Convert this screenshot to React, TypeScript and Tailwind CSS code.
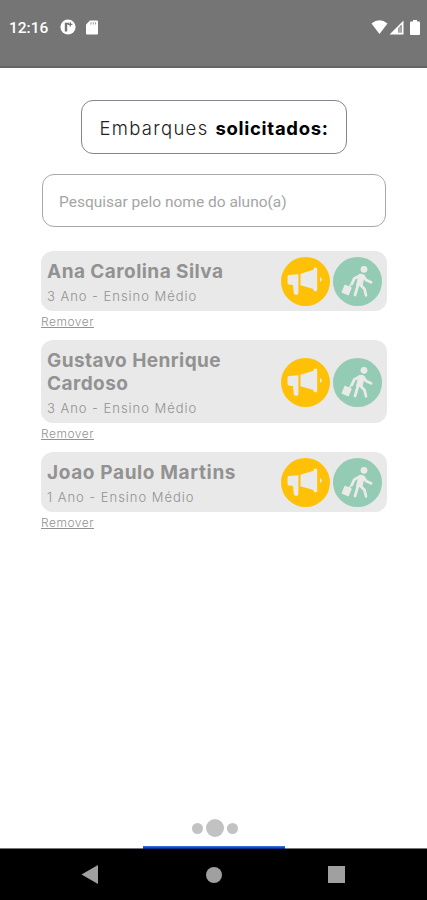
import React from "react";

const students = [
  { id: 1, name: "Ana Carolina Silva", grade: "3 Ano - Ensino Médio", nameClass: "tracking-[0.45px]" },
  { id: 2, name: "Gustavo Henrique Cardoso", grade: "3 Ano - Ensino Médio", nameClass: "tracking-[0.43px]" },
  { id: 3, name: "Joao Paulo Martins", grade: "1 Ano - Ensino Médio", nameClass: "tracking-[0.63px]" },
];

const StatusBar: React.FC = () => (
  <header className="flex h-[68px] shrink-0 items-start justify-between border-b-2 border-[#646464] bg-[#757575] pt-[18px] pr-[7px] pl-[9px] text-white">
    <div className="flex h-[18px] items-center">
      <span className="w-[40px] pt-px font-['Roboto',sans-serif] text-[15.5px] leading-5 font-medium whitespace-nowrap">12:16</span>
      <svg className="ml-[11px] h-4 w-4" viewBox="0 0 16 16">
        <circle cx="8" cy="8" r="7.6" fill="#fff" />
        <path d="M4.8 3.8H9V5.6H7.2V12.5H4.8Z" fill="#757575" />
        <path d="M10.3 3.2V7.6M8.2 5.4H12.4" stroke="#757575" strokeWidth="1.3" />
      </svg>
      <svg className="ml-[10px] h-[15px] w-3" viewBox="0 0 12 15">
        <path d="M4 .5H11Q12 .5 12 1.5V13.5Q12 14.5 11 14.5H1Q0 14.5 0 13.5V4.5Z" fill="#fff" />
        <path d="M5 2.2V4.5M7.3 2.2V4.5M9.6 2.2V4.5" stroke="#9a9a9a" strokeWidth="1" />
      </svg>
    </div>
    <div className="flex h-[18px] items-center">
      <svg className="h-4 w-[17px]" viewBox="0 0 17 16">
        <path d="M.5 4.5Q8.5-1.8 16.5 4.5L8.5 15Z" fill="#fff" />
      </svg>
      <svg className="ml-px h-[15px] w-[15px]" viewBox="0 0 15 15">
        <path fillRule="evenodd" d="M.5 14.5 14.5.5V14.5ZM9.3 8V12.8H12.7V4.6Z" fill="#fff" />
        <path d="M11 7V13" stroke="#fff" strokeWidth=".8" />
      </svg>
      <svg className="ml-[6px] h-[15px] w-[10px]" viewBox="0 0 10 15">
        <path d="M3 0H7V1.5H9Q10 1.5 10 2.5V14Q10 15 9 15H1Q0 15 0 14V2.5Q0 1.5 1 1.5H3Z" fill="#fff" />
      </svg>
    </div>
  </header>
);

const MegaphoneIcon: React.FC = () => (
  <svg className="h-[49px] w-[49px]" viewBox="0 0 49 49">
    <circle cx="24.5" cy="24.5" r="24.5" fill="#ffc107" />
    <path
      d="M8 18Q6.5 18.2 6.5 19.8V25.8Q6.5 27.4 8 27.6L12 28L12.8 36Q13 37.8 14.7 37.8H15.8Q17.4 37.8 17.4 36V17.2ZM19.5 16.8 32.5 12.8V12Q32.5 10.5 34 10.5H34.7Q36.2 10.5 36.2 12V32.7Q36.2 34.2 34.7 34.2H34Q32.5 34.2 32.5 32.7V32L19.5 28.3ZM39 20Q42.8 22.5 39 25Z"
      fill="#eaeaea"
    />
  </svg>
);

const TravelerIcon: React.FC = () => (
  <svg className="h-[49px] w-[49px]" viewBox="0 0 49 49">
    <circle cx="24.5" cy="24.5" r="24.5" fill="#94cbb5" />
    <circle cx="31" cy="12.3" r="3.4" fill="#eaeaea" />
    <path d="M26 17.5Q29.5 16.2 31.2 19L29 28.8 23.5 28.2Z" fill="#eaeaea" stroke="#eaeaea" strokeWidth="1" strokeLinejoin="round" />
    <path d="M27 18.5 21.3 21.5 18.8 26.8M30.5 19 33 23 38 25.3M25 28 22 38M28 28.5 31.5 32 33 38.3" fill="none" stroke="#eaeaea" strokeWidth="2.8" strokeLinecap="round" strokeLinejoin="round" />
    <path d="M18.8 26.8 16 30" stroke="#eaeaea" strokeWidth="1.5" />
    <path d="M12 28.5 18 31 15.2 37.7 9.3 35.2Z" fill="#eaeaea" stroke="#eaeaea" strokeWidth="1.4" strokeLinejoin="round" />
  </svg>
);

export default function App() {
  return (
    <div className="flex h-[900px] w-[427px] flex-col overflow-hidden bg-white font-['Inter',sans-serif]">
      <StatusBar />

      <main className="flex flex-1 flex-col px-[41px] pt-8">
        <h1 className="flex h-[54px] w-[266px] items-center self-center rounded-[12px] border border-[#85858d] pt-[3px] pl-[18px] text-[18.5px] whitespace-pre text-black">
          <span className="w-[116px] font-light tracking-[1.3px] text-[#222]">Embarques</span>
          <span className="font-bold tracking-[0.7px]">solicitados:</span>
        </h1>

        <input
          type="text"
          placeholder="Pesquisar pelo nome do aluno(a)"
          className="mt-5 ml-px h-[53px] w-[344px] rounded-[12px] border border-[#a8a8a8] px-4 pt-[2px] font-['Roboto',sans-serif] text-[15.5px] outline-none placeholder:text-[#a5a5a5]"
        />

        {/* Boarding requests */}
        <ul className="mt-6 w-[346px]">
          {students.map((student) => (
            <li key={student.id} className="mb-[9px]">
              <div className="flex items-center justify-between rounded-[12px] bg-[#e9e9e9] pt-[6px] pr-[5px] pb-[5px] pl-[6px]">
                <div className="w-[215px] pt-[3px]">
                  <h2 className={`text-[19px] leading-[23px] font-bold text-[#929292] ${student.nameClass}`}>{student.name}</h2>
                  <p className="mt-[3px] text-[13px] leading-5 font-light tracking-[0.97px] text-[#929292]">{student.grade}</p>
                </div>
                <div className="flex shrink-0 gap-[3px]">
                  <button type="button" aria-label="Chamar"><MegaphoneIcon /></button>
                  <button type="button" aria-label="Embarcar"><TravelerIcon /></button>
                </div>
              </div>
              <button type="button" className="block h-5 text-[12px] leading-[21px] font-light tracking-[0.5px] text-[#929292] underline">Remover</button>
            </li>
          ))}
        </ul>
      </main>

      <div className="flex h-10 shrink-0 items-start justify-center gap-[3px] pl-[2px]">
        <span className="mt-[17px] h-[11px] w-[11px] rounded-full bg-[#c2c2c2]" />
        <span className="mt-[13px] h-[18px] w-[18px] rounded-full bg-[#c2c2c2]" />
        <span className="mt-[17px] h-[11px] w-[11px] rounded-full bg-[#c2c2c2]" />
      </div>
      <div className="flex h-[3px] shrink-0 justify-center bg-linear-to-b from-white from-66% to-[#777] to-67% pl-px">
        <span className="h-full w-[142px] bg-linear-to-b from-[#356ade] from-33% to-[#062f92] to-67%" />
      </div>

      {/* System navigation */}
      <nav className="flex h-[51px] shrink-0 items-center bg-black pl-[81px]">
        <svg className="h-[19px] w-[17px]" viewBox="0 0 17 19"><path d="M.5 9.5 17 0V19Z" fill="#a0a0a0" /></svg>
        <span className="ml-[108px] h-4 w-4 rounded-full bg-[#a0a0a0]" />
        <span className="ml-[106px] h-[17px] w-[17px] bg-[#a0a0a0]" />
      </nav>
    </div>
  );
}
